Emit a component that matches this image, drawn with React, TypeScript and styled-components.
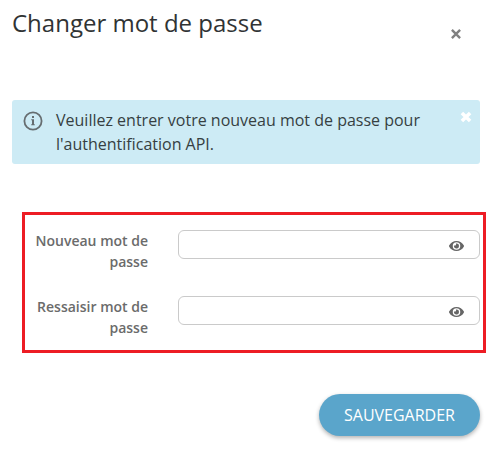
import React from "react";
import styled, { createGlobalStyle } from "styled-components";
import { FaEye } from "react-icons/fa";

const GlobalStyle = createGlobalStyle`
  * { box-sizing: border-box; }
  body {
    margin: 0;
    background: #fff;
    font-family: "Open Sans", sans-serif;
    overflow: hidden;
  }
`;

const Dialog = styled.main`
  height: 451px;
  padding: 0 8px 0 12px;
  display: flex;
  flex-direction: column;
`;

const Header = styled.header`
  height: 100px;
  padding: 6px 24px 0 0;
  display: flex;
  justify-content: space-between;
  align-items: flex-start;
`;

const Title = styled.h1`
  margin: 0;
  font-size: 24px;
  line-height: 33px;
  font-weight: 400;
  color: #303334;
`;

const IconButton = styled.button<{ $color: string }>`
  display: flex;
  padding: 0;
  border: 0;
  background: none;
  color: ${({ $color }) => $color};
`;

const CloseButton = styled(IconButton)`
  margin-top: 22px;
`;

const DismissButton = styled(IconButton)`
  margin-top: 3px;
`;

const Alert = styled.section`
  height: 64px;
  margin-right: 6px;
  padding: 8px 8px 8px 11px;
  display: flex;
  align-items: flex-start;
  background: #cdebf5;
  border-radius: 3px;
`;

const InfoIcon = styled.svg`
  flex: none;
  margin-top: 3px;
`;

const AlertText = styled.p`
  flex: 1;
  margin: 0 20px 0 13px;
  font-size: 16px;
  line-height: 24px;
  color: #363f42;
`;

const Fields = styled.form`
  height: 141px;
  margin: 48px 0 0 10px;
  padding: 15px 3px 0 8px;
  border: 3px solid #ed1c24;
  display: flex;
  flex-direction: column;
  gap: 24px;
`;

const Field = styled.div`
  display: grid;
  grid-template-columns: 115px 302px;
  column-gap: 30px;
  height: 42px;
`;

const Label = styled.label`
  font-size: 14px;
  line-height: 21px;
  font-weight: 600;
  text-align: right;
  color: #6b6b6b;
`;

const InputFrame = styled.div`
  height: 29px;
  display: flex;
  align-items: center;
  padding: 2px 15px 0 8px;
  border: 1px solid #cacaca;
  border-radius: 6px;
  background: #fff;
`;

const Input = styled.input`
  flex: 1;
  min-width: 0;
  height: 22px;
  padding: 0;
  border: 0;
  outline: 0;
  background: transparent;
  font: inherit;
  font-size: 14px;
`;

const EyeIcon = styled(FaEye)`
  width: 15px;
  height: 14px;
`;

const SaveButton = styled.button`
  align-self: flex-end;
  width: 161px;
  height: 42px;
  margin: 41px 6px 0 0;
  padding: 0;
  border: 0;
  border-radius: 21px;
  background: #5aa5cb;
  box-shadow: 0 2px 4px rgba(0, 0, 0, 0.3);
  color: #fff;
  font-family: inherit;
  font-size: 16px;
  line-height: 24px;
`;

function Cross({ weight }: { weight: number }) {
  return (
    <svg width="12" height="12" viewBox="0 0 12 12">
      <path d="M1.9 1.9L10.1 10.1M10.1 1.9L1.9 10.1" stroke="currentColor" strokeWidth={weight} />
    </svg>
  );
}

function PasswordField({ id, label }: { id: string; label: string }) {
  return (
    <Field>
      <Label htmlFor={id}>{label}</Label>
      <InputFrame>
        <Input id={id} type="password" />
        <IconButton type="button" $color="#666" aria-label="Afficher">
          <EyeIcon />
        </IconButton>
      </InputFrame>
    </Field>
  );
}

export default function App() {
  return (
    <>
      <GlobalStyle />
      <Dialog>
        <Header>
          <Title>Changer mot de passe</Title>
          <CloseButton $color="#808080" aria-label="Fermer">
            <Cross weight={2.4} />
          </CloseButton>
        </Header>
        <Alert>
          <InfoIcon width="20" height="20" viewBox="0 0 20 20" fill="none">
            <circle cx="10" cy="10" r="8.6" stroke="#666d70" strokeWidth="1.8" />
            <rect x="9" y="5" width="2" height="2" fill="#666d70" />
            <path d="M8.2 8.2H11V13.2H11.8V14.2H8.2V13.2H9V9.2H8.2Z" fill="#666d70" />
          </InfoIcon>
          <AlertText>Veuillez entrer votre nouveau mot de passe pour l'authentification API.</AlertText>
          <DismissButton $color="#fff" aria-label="Fermer le message">
            <Cross weight={3.5} />
          </DismissButton>
        </Alert>
        <Fields>
          <PasswordField id="new-password" label="Nouveau mot de passe" />
          <PasswordField id="confirm-password" label="Ressaisir mot de passe" />
        </Fields>
        <SaveButton type="button">SAUVEGARDER</SaveButton>
      </Dialog>
    </>
  );
}
